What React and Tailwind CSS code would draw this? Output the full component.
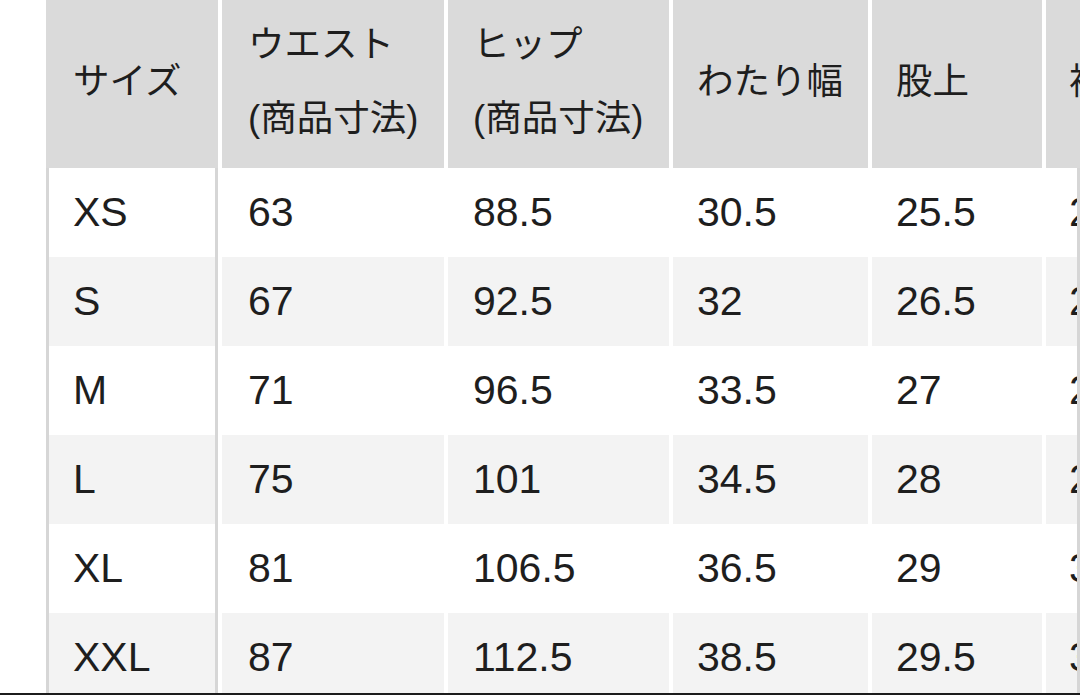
const headers = [
  { label: ["サイズ"], w: "w-[172px]", pl: "pl-[27px]" },
  { label: ["ウエスト", "(商品寸法)"], w: "w-[222px]", pl: "pl-[26px]" },
  { label: ["ヒップ", "(商品寸法)"], w: "w-[221px]", pl: "pl-[25px]" },
  { label: ["わたり幅"], w: "w-[195px]", pl: "pl-[24px]" },
  { label: ["股上"], w: "w-[170px]", pl: "pl-[24px]" },
  { label: ["裾幅"], w: "w-[200px]", pl: "pl-[23px]" },
];

const rows = [
  ["XS", "63", "88.5", "30.5", "25.5", "21.5"],
  ["S", "67", "92.5", "32", "26.5", "22.5"],
  ["M", "71", "96.5", "33.5", "27", "23.5"],
  ["L", "75", "101", "34.5", "28", "24.5"],
  ["XL", "81", "106.5", "36.5", "29", "30"],
  ["XXL", "87", "112.5", "38.5", "29.5", "31"],
];

const App = () => {
  return (
    <div
      className="w-[1080px] h-[695px] overflow-hidden bg-white border-b-2 border-[#1c1c1c] text-[#1e1e1e]"
      style={{ fontFamily: '"Liberation Sans", "Noto Sans CJK JP", sans-serif' }}
    >
      <div className="pl-[46px]">
        {/* header */}
        <div className="flex gap-[4px] h-[168px] w-[1100px] text-[36.5px]">
          {headers.map((h, i) => (
            <div key={i} className={`${h.w} ${h.pl} shrink-0 bg-[#dadada] flex flex-col justify-center leading-[74px] pb-[4px]`}>
              {h.label.map((l, j) => (
                <span key={j} className="whitespace-nowrap">{l}</span>
              ))}
            </div>
          ))}
        </div>

        {/* body */}
        <div className="w-[1034px] overflow-hidden border-r-[3px] border-[#d6d6d6] text-[41px]">
          {rows.map((r, ri) => (
            <div key={ri} className="flex gap-[4px] h-[89px] w-[1100px]">
              {r.map((v, ci) => (
                <div
                  key={ci}
                  className={`${headers[ci].w} shrink-0 flex items-center ${ri % 2 === 1 ? "bg-[#f3f3f3]" : "bg-white"} ${
                    ci === 0 ? "border-l-[3px] border-r-[3px] border-[#d6d6d6] pl-[24px]" : headers[ci].pl
                  }`}
                >
                  {v}
                </div>
              ))}
            </div>
          ))}
        </div>
      </div>
    </div>
  );
};

export default App;
